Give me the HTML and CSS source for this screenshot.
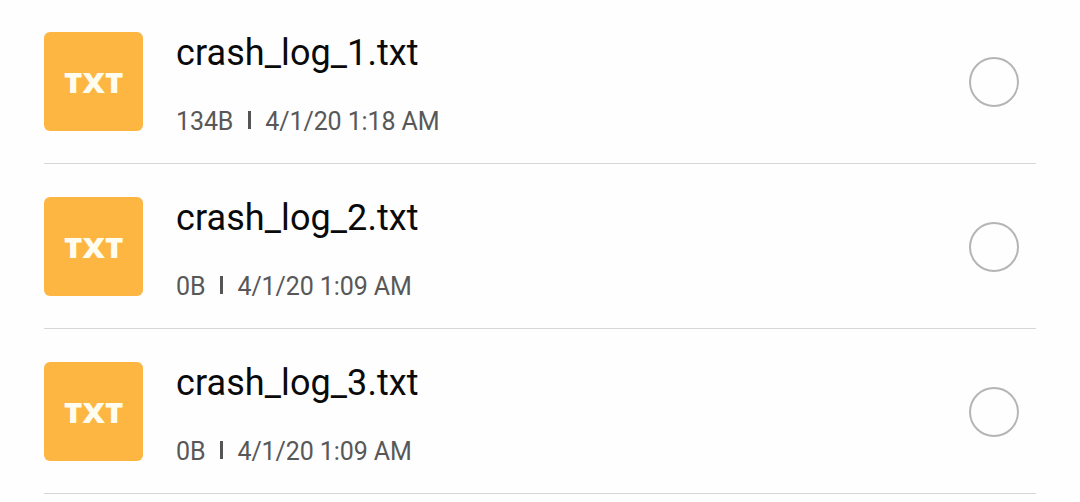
FILE: index.html
```html
<!DOCTYPE html>
<html lang="en">
<head>
  <meta charset="UTF-8"/>
  <meta name="viewport" content="width=device-width, initial-scale=1.0"/>
  <title>Files</title>
  <link rel="stylesheet" href="styles.css">
</head>
<body>
  <ul class="file-list">
    <li class="file">
      <div class="icon"><span>TXT</span></div>
      <div class="info">
        <div class="name">crash_log_1.txt</div>
        <div class="meta"><span>134B</span><i class="sep"></i><span>4/1/20 1:18 AM</span></div>
      </div>
      <div class="check"></div>
    </li>
    <li class="file">
      <div class="icon"><span>TXT</span></div>
      <div class="info">
        <div class="name">crash_log_2.txt</div>
        <div class="meta"><span>0B</span><i class="sep"></i><span>4/1/20 1:09 AM</span></div>
      </div>
      <div class="check"></div>
    </li>
    <li class="file">
      <div class="icon"><span>TXT</span></div>
      <div class="info">
        <div class="name">crash_log_3.txt</div>
        <div class="meta"><span>0B</span><i class="sep"></i><span>4/1/20 1:09 AM</span></div>
      </div>
      <div class="check"></div>
    </li>
  </ul>
</body>
</html>
```
FILE: styles.css
```css
* {
  box-sizing: border-box;
  margin: 0;
  padding: 0;
}

body {
  font-family: Roboto, sans-serif;
  background: #fefefe;
  color: #0a0a0a;
  overflow: hidden;
}

.file-list {
  list-style: none;
  padding: 0 44px;
  margin-top: -1px;
}

.file {
  display: flex;
  align-items: center;
  height: 165px;
  padding-right: 17px;
  border-bottom: 1px solid #d6d6d6;
}

.icon {
  width: 99px;
  height: 99px;
  border-radius: 6px;
  background: #fdb642;
  color: #fffdf0;
  font-family: "Open Sans", sans-serif;
  font-size: 28px;
  font-weight: 800;
  line-height: 101px;
  text-align: center;
}

.icon span {
  display: inline-block;
  transform: scaleX(1.11);
}

.info {
  flex: 1;
  margin-left: 33px;
  padding-top: 7px;
}

.name {
  font-size: 36px;
  line-height: 42px;
  letter-spacing: 0.08px;
}

.meta {
  display: flex;
  align-items: center;
  margin-top: 33px;
  font-size: 25px;
  line-height: 30px;
  letter-spacing: -0.1px;
  color: #585858;
}

.sep {
  width: 3px;
  height: 18px;
  margin: 0 14px 4px 15px;
  background: #555;
}

.check {
  width: 50px;
  height: 50px;
  margin-top: 2px;
  border: 2px solid #b5b5b5;
  border-radius: 50%;
}
```
